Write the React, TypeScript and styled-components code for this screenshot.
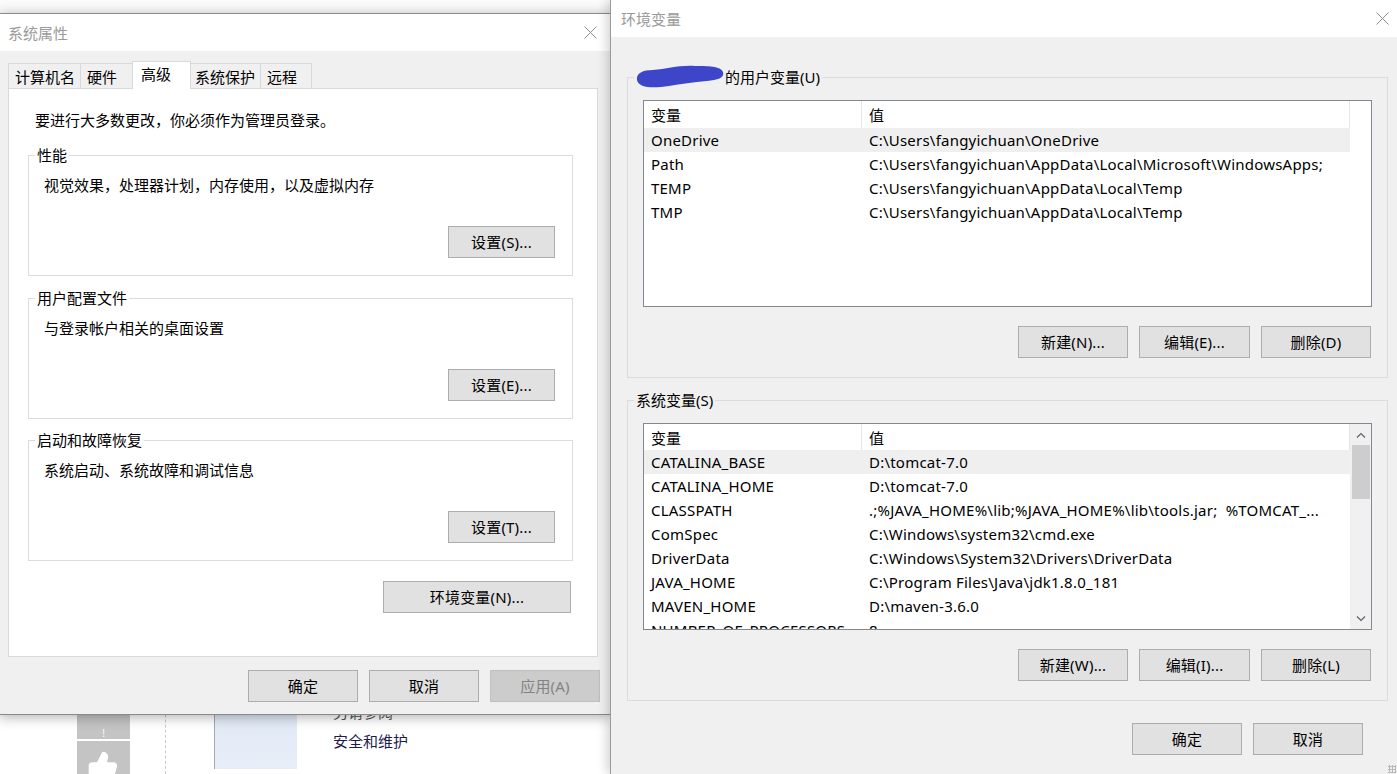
import React from "react";
import styled, { createGlobalStyle } from "styled-components";
import { ThumbsUp } from "lucide-react";

const GlobalStyle = createGlobalStyle`
  html, body {
    margin: 0;
    padding: 0;
    background: #fff;
    overflow: hidden;
  }
  body {
    font-family: "Noto Sans", "Noto Sans CJK SC", sans-serif;
    font-size: 15px;
    color: #000;
  }
`;

const Desktop = styled.div`
  position: relative;
  width: 1397px;
  height: 774px;
  overflow: hidden;
  background: #fbfbfb;
`;

/* ---------- control panel peeking out behind the dialogs ---------- */

const Backdrop = styled.div`
  height: 100%;
  display: flex;
  flex-direction: column;
  justify-content: flex-end;
`;

const CpRow = styled.div`
  display: flex;
  height: 70px;
  background: #fff;
`;

const SideColumn = styled.div`
  margin-left: 77px;
  width: 53px;
  display: flex;
  flex-direction: column;
  gap: 2px;
`;

const SideBlock = styled.div<{ $grow?: boolean }>`
  background: #c4c4c4;
  height: ${(p) => (p.$grow ? "auto" : "35px")};
  flex: ${(p) => (p.$grow ? 1 : "none")};
  display: flex;
  justify-content: center;
  align-items: flex-end;
  overflow: hidden;
  color: #fff;
  font-size: 10px;
  line-height: 12px;
`;

const ThumbSlot = styled.div`
  margin-bottom: -8px;
  margin-right: 2px;
  display: flex;
`;

const DottedLine = styled.div`
  margin-left: 35px;
  border-left: 1px dashed #c8c8c8;
`;

const PreviewBox = styled.div`
  margin-left: 48px;
  width: 82px;
  height: 65px;
  border-left: 1px solid #a8a8a8;
  background: linear-gradient(180deg, #dfe8f5 0%, #e8eef8 100%);
`;

const LinkColumn = styled.div`
  margin-left: 36px;
  display: flex;
  flex-direction: column;
`;

const SeeAlso = styled.div`
  margin-top: -2px;
  line-height: 20px;
  color: #555;
`;

const CpLink = styled.div`
  margin-top: 9px;
  line-height: 20px;
  color: #1c1c4c;
`;

/* ---------- window chrome ---------- */

const Window = styled.div<{
  $left: number;
  $top: number;
  $width: number;
  $height: number;
  $z: number;
}>`
  position: absolute;
  left: ${(p) => p.$left}px;
  top: ${(p) => p.$top}px;
  width: ${(p) => p.$width}px;
  height: ${(p) => p.$height}px;
  z-index: ${(p) => p.$z};
  box-sizing: border-box;
  background: #f0f0f0;
  display: flex;
  flex-direction: column;
`;

const LeftFrame = styled(Window)`
  border: 1px solid #8a8a8a;
  box-shadow: 0 2px 12px rgba(0, 0, 0, 0.32);
`;

const RightFrame = styled(Window)`
  border-left: 1px solid #9a9a9a;
  box-shadow: -3px 0 10px rgba(0, 0, 0, 0.18);
`;

const TitleBar = styled.div<{ $pad: number }>`
  height: 37px;
  flex: none;
  background: #fff;
  display: flex;
  align-items: center;
  padding-left: ${(p) => p.$pad}px;
  color: #9a9a9a;
`;

const TitleText = styled.div`
  flex: 1;
  line-height: 20px;
`;

const CloseBox = styled.div<{ $w: number }>`
  width: ${(p) => p.$w}px;
  height: 100%;
  display: flex;
  align-items: center;
  justify-content: center;
`;

const CloseIcon = () => (
  <svg width="13" height="13" viewBox="0 0 13 13">
    <path d="M0.5 0.5 L12.5 12.5 M12.5 0.5 L0.5 12.5" stroke="#8c8c8c" strokeWidth="1" fill="none" />
  </svg>
);

/* ---------- common controls ---------- */

const Button = styled.div<{ $w?: number; $disabled?: boolean }>`
  width: ${(p) => p.$w ?? 110}px;
  height: 32px;
  flex: none;
  box-sizing: border-box;
  border: 1px solid ${(p) => (p.$disabled ? "#bfbfbf" : "#adadad")};
  background: ${(p) => (p.$disabled ? "#cccccc" : "#e1e1e1")};
  color: ${(p) => (p.$disabled ? "#838383" : "#000")};
  display: flex;
  align-items: center;
  justify-content: center;
  line-height: 20px;
  letter-spacing: 0.2px;
`;

const GroupBox = styled.div<{ $w: number; $h: number; $bg: string; $mt: number }>`
  width: ${(p) => p.$w}px;
  height: ${(p) => p.$h}px;
  margin-top: ${(p) => p.$mt}px;
  box-sizing: border-box;
  border: 1px solid #dcdcdc;
  display: flex;
  flex-direction: column;
  flex: none;
  --legend-bg: ${(p) => p.$bg};
`;

const Legend = styled.div`
  align-self: flex-start;
  display: flex;
  align-items: center;
  height: 20px;
  line-height: 20px;
  margin: -11px 0 0 6px;
  padding: 0 2px;
  background: var(--legend-bg);
`;

/* ---------- system properties dialog ---------- */

const LeftBody = styled.div`
  flex: 1;
  padding: 10px 0 0 8px;
  display: flex;
  flex-direction: column;
`;

const TabStrip = styled.div`
  position: relative;
  z-index: 1;
  display: flex;
  align-items: flex-end;
  height: 28px;
  margin: 0 0 -1px 1px;
`;

const Tab = styled.div<{ $w: number; $pad: number; $active?: boolean }>`
  width: ${(p) => p.$w}px;
  box-sizing: border-box;
  height: ${(p) => (p.$active ? 28 : 25)}px;
  margin-bottom: ${(p) => (p.$active ? 0 : 1)}px;
  margin-left: -1px;
  padding-left: ${(p) => p.$pad}px;
  border: 1px solid #d9d9d9;
  border-bottom: none;
  background: ${(p) => (p.$active ? "#fff" : "#f0f0f0")};
  line-height: ${(p) => (p.$active ? 24 : 27)}px;
  white-space: nowrap;
`;

const TabPanel = styled.div`
  width: 590px;
  height: 569px;
  box-sizing: border-box;
  border: 1px solid #d9d9d9;
  background: #fff;
  padding: 21px 0 0 19px;
  display: flex;
  flex-direction: column;
`;

const Notice = styled.div`
  margin-left: 7px;
  line-height: 20px;
`;

const GroupText = styled.div`
  margin: 10px 0 0 15px;
  line-height: 20px;
`;

const GroupAction = styled.div`
  margin-top: auto;
  align-self: flex-end;
  margin-right: 17px;
  margin-bottom: 17px;
`;

const EnvRow = styled.div`
  display: flex;
  justify-content: flex-end;
  width: 543px;
  margin-top: 20px;
`;

const FooterRow = styled.div<{ $right: number; $mt: number }>`
  display: flex;
  justify-content: flex-end;
  gap: 11px;
  margin-top: ${(p) => p.$mt}px;
  padding-right: ${(p) => p.$right}px;
`;

/* ---------- environment variables dialog ---------- */

const RightBody = styled.div`
  flex: 1;
  padding: 40px 0 0 16px;
  display: flex;
  flex-direction: column;
  position: relative;
`;

const ListView = styled.div`
  margin: 13px 0 0 15px;
  width: 729px;
  height: 207px;
  box-sizing: border-box;
  border: 1px solid #828790;
  background: #fff;
  display: flex;
  flex: none;
`;

const ListMain = styled.div`
  width: 706px;
  overflow: hidden;
`;

const HeaderRow = styled.div<{ $h: number }>`
  display: grid;
  grid-template-columns: 218px 488px;
  height: ${(p) => p.$h}px;
`;

const HeaderCell = styled.div`
  border-right: 1px solid #e5e5e5;
  padding: 2px 0 0 7px;
  line-height: 24px;
`;

const Row = styled.div<{ $selected?: boolean }>`
  display: grid;
  grid-template-columns: 218px 488px;
  height: 24px;
  line-height: 24px;
  background: ${(p) => (p.$selected ? "#efefef" : "transparent")};
`;

const Cell = styled.div`
  padding-left: 7px;
  white-space: pre;
  overflow: hidden;
  letter-spacing: 0.22px;
`;

const Scrollbar = styled.div`
  width: 21px;
  background: #f0f0f0;
  display: flex;
  flex-direction: column;
`;

const ScrollArrow = styled.div`
  height: 21px;
  display: flex;
  align-items: center;
  justify-content: center;
`;

const ScrollThumb = styled.div`
  height: 54px;
  margin: 0 1px 0 2px;
  background: #cdcdcd;
`;

const ScrollSpacer = styled.div`
  flex: 1;
`;

const ListButtons = styled.div`
  display: flex;
  justify-content: flex-end;
  gap: 11px;
  margin: 19px 16px 0 0;
`;

const Redaction = () => (
  <svg width="90" height="26" viewBox="0 0 90 26" style={{ marginLeft: -1 }}>
    <path
      d="M2 16 C1 9 8 6 18 6 C32 5 44 1 60 2 C72 2 86 2 88 8 C90 14 82 16 72 17 C58 18 46 20 34 22 C20 24 4 25 2 16 Z"
      fill="#3d46c9"
    />
  </svg>
);

const Chevron = ({ up }: { up?: boolean }) => (
  <svg width="10" height="6" viewBox="0 0 10 6">
    <path
      d={up ? "M1 5.5 L5 1.5 L9 5.5" : "M1 0.5 L5 4.5 L9 0.5"}
      stroke="#606060"
      strokeWidth="1.2"
      fill="none"
    />
  </svg>
);

const Grip = styled.div`
  position: absolute;
  right: 1px;
  bottom: 1px;
  width: 8px;
  height: 8px;
  background-image: radial-gradient(circle, #b8b8b8 1px, transparent 1.2px);
  background-size: 3px 3px;
`;

const tabs = [
  { label: "计算机名", w: 73, pad: 6 },
  { label: "硬件", w: 53, pad: 6 },
  { label: "高级", w: 59, pad: 8, active: true },
  { label: "系统保护", w: 71, pad: 4 },
  { label: "远程", w: 52, pad: 6 },
];

const groups = [
  { title: "性能", text: "视觉效果，处理器计划，内存使用，以及虚拟内存", btn: "设置(S)...", mt: 25 },
  { title: "用户配置文件", text: "与登录帐户相关的桌面设置", btn: "设置(E)...", mt: 22 },
  { title: "启动和故障恢复", text: "系统启动、系统故障和调试信息", btn: "设置(T)...", mt: 21 },
];

const userVars = [
  ["OneDrive", "C:\\Users\\fangyichuan\\OneDrive"],
  ["Path", "C:\\Users\\fangyichuan\\AppData\\Local\\Microsoft\\WindowsApps;"],
  ["TEMP", "C:\\Users\\fangyichuan\\AppData\\Local\\Temp"],
  ["TMP", "C:\\Users\\fangyichuan\\AppData\\Local\\Temp"],
];

const systemVars = [
  ["CATALINA_BASE", "D:\\tomcat-7.0"],
  ["CATALINA_HOME", "D:\\tomcat-7.0"],
  ["CLASSPATH", ".;%JAVA_HOME%\\lib;%JAVA_HOME%\\lib\\tools.jar;  %TOMCAT_..."],
  ["ComSpec", "C:\\Windows\\system32\\cmd.exe"],
  ["DriverData", "C:\\Windows\\System32\\Drivers\\DriverData"],
  ["JAVA_HOME", "C:\\Program Files\\Java\\jdk1.8.0_181"],
  ["MAVEN_HOME", "D:\\maven-3.6.0"],
  ["NUMBER_OF_PROCESSORS", "8"],
];

const VarList = ({
  rows,
  scroll,
  headerHeight,
}: {
  rows: string[][];
  scroll?: boolean;
  headerHeight: number;
}) => (
  <ListView>
    <ListMain>
      <HeaderRow $h={headerHeight}>
        <HeaderCell>变量</HeaderCell>
        <HeaderCell>值</HeaderCell>
      </HeaderRow>
      {rows.map(([name, value], i) => (
        <Row key={name} $selected={i === 0}>
          <Cell>{name}</Cell>
          <Cell>{value}</Cell>
        </Row>
      ))}
    </ListMain>
    {scroll && (
      <Scrollbar>
        <ScrollArrow>
          <Chevron up />
        </ScrollArrow>
        <ScrollThumb />
        <ScrollSpacer />
        <ScrollArrow>
          <Chevron />
        </ScrollArrow>
      </Scrollbar>
    )}
  </ListView>
);

export default function App() {
  return (
    <Desktop>
      <GlobalStyle />

      <Backdrop>
        <CpRow>
          <SideColumn>
            <SideBlock>!</SideBlock>
            <SideBlock $grow>
              <ThumbSlot>
                <ThumbsUp size={32} color="#fff" fill="#fff" strokeWidth={1.5} />
              </ThumbSlot>
            </SideBlock>
          </SideColumn>
          <DottedLine />
          <PreviewBox />
          <LinkColumn>
            <SeeAlso>另请参阅</SeeAlso>
            <CpLink>安全和维护</CpLink>
          </LinkColumn>
        </CpRow>
      </Backdrop>

      <LeftFrame $left={-1} $top={13} $width={612} $height={702} $z={1}>
        <TitleBar $pad={8}>
          <TitleText>系统属性</TitleText>
          <CloseBox $w={40}>
            <CloseIcon />
          </CloseBox>
        </TitleBar>
        <LeftBody>
          <TabStrip>
            {tabs.map((t) => (
              <Tab key={t.label} $w={t.w} $pad={t.pad} $active={t.active}>
                {t.label}
              </Tab>
            ))}
          </TabStrip>
          <TabPanel>
            <Notice>要进行大多数更改，你必须作为管理员登录。</Notice>
            {groups.map((g) => (
              <GroupBox key={g.title} $w={545} $h={121} $bg="#fff" $mt={g.mt}>
                <Legend>{g.title}</Legend>
                <GroupText>{g.text}</GroupText>
                <GroupAction>
                  <Button $w={107}>{g.btn}</Button>
                </GroupAction>
              </GroupBox>
            ))}
            <EnvRow>
              <Button $w={188}>环境变量(N)...</Button>
            </EnvRow>
          </TabPanel>
          <FooterRow $right={10} $mt={13}>
            <Button>确定</Button>
            <Button>取消</Button>
            <Button $disabled>应用(A)</Button>
          </FooterRow>
        </LeftBody>
      </LeftFrame>

      <RightFrame $left={610} $top={0} $width={787} $height={774} $z={2}>
        <TitleBar $pad={10}>
          <TitleText>环境变量</TitleText>
          <CloseBox $w={30}>
            <CloseIcon />
          </CloseBox>
        </TitleBar>
        <RightBody>
          <GroupBox $w={761} $h={301} $bg="#f0f0f0" $mt={0}>
            <Legend>
              <Redaction />
              的用户变量(U)
            </Legend>
            <VarList rows={userVars} headerHeight={27} />
            <ListButtons>
              <Button>新建(N)...</Button>
              <Button $w={111}>编辑(E)...</Button>
              <Button>删除(D)</Button>
            </ListButtons>
          </GroupBox>
          <GroupBox $w={761} $h={301} $bg="#f0f0f0" $mt={22}>
            <Legend>系统变量(S)</Legend>
            <VarList rows={systemVars} headerHeight={26} scroll />
            <ListButtons>
              <Button>新建(W)...</Button>
              <Button $w={111}>编辑(I)...</Button>
              <Button>删除(L)</Button>
            </ListButtons>
          </GroupBox>
          <FooterRow $right={34} $mt={22}>
            <Button>确定</Button>
            <Button>取消</Button>
          </FooterRow>
          <Grip />
        </RightBody>
      </RightFrame>
    </Desktop>
  );
}
